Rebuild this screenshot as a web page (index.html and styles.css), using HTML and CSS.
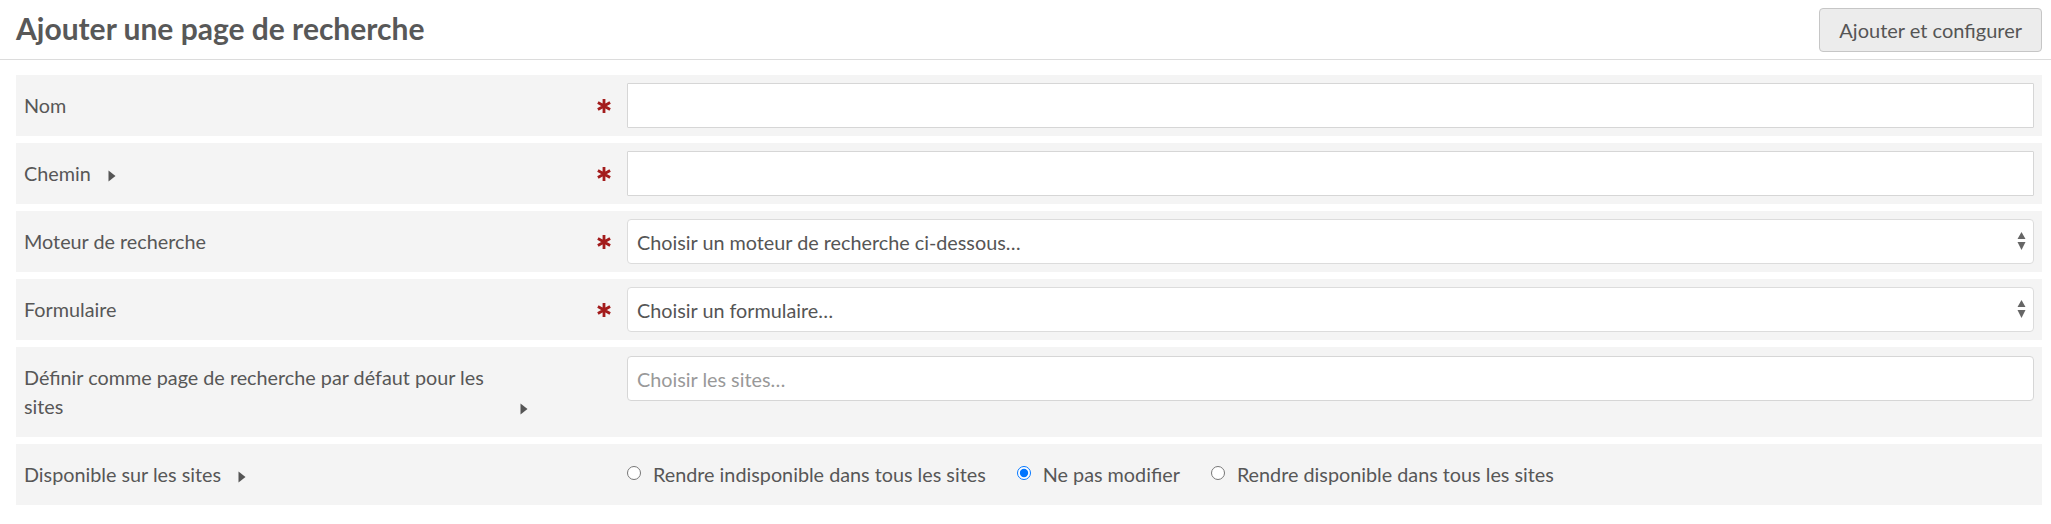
FILE: index.html
```html
<!DOCTYPE html>
<html lang="fr">
<head>
    <meta charset="UTF-8">
    <meta name="viewport" content="width=device-width, initial-scale=1.0">
    <title>Ajouter une page de recherche</title>
    <link rel="stylesheet" href="styles.css">
</head>
<body>
    <header class="page-header">
        <h1 class="page-title">Ajouter une page de recherche</h1>
        <button type="button" class="btn">Ajouter et configurer</button>
    </header>

    <form class="search-form">
        <div class="form-row">
            <label class="form-label" for="name"><span class="label-text">Nom</span></label>
            <div class="required">
                <svg class="asterisk" width="14" height="14" viewBox="0 0 14 14"><path d="M7 0V14M0.9 3.5L13.1 10.5M0.9 10.5L13.1 3.5"/></svg>
            </div>
            <div class="control"><input type="text" id="name" class="text-input"></div>
        </div>

        <div class="form-row">
            <label class="form-label" for="path">
                <span class="label-text">Chemin</span>
                <span class="caret"><svg width="8" height="12" viewBox="0 0 8 12"><path d="M0.5 0.5L7.5 6L0.5 11.5Z"/></svg></span>
            </label>
            <div class="required">
                <svg class="asterisk" width="14" height="14" viewBox="0 0 14 14"><path d="M7 0V14M0.9 3.5L13.1 10.5M0.9 10.5L13.1 3.5"/></svg>
            </div>
            <div class="control"><input type="text" id="path" class="text-input"></div>
        </div>

        <div class="form-row">
            <label class="form-label" for="engine"><span class="label-text">Moteur de recherche</span></label>
            <div class="required">
                <svg class="asterisk" width="14" height="14" viewBox="0 0 14 14"><path d="M7 0V14M0.9 3.5L13.1 10.5M0.9 10.5L13.1 3.5"/></svg>
            </div>
            <div class="control">
                <div class="select-wrap">
                    <select id="engine" class="select">
                        <option>Choisir un moteur de recherche ci-dessous…</option>
                    </select>
                    <svg class="select-arrows" width="9" height="18" viewBox="0 0 9 18"><path d="M0.5 7L4.5 0L8.5 7Z M0.5 10H8.5L4.5 18Z"/></svg>
                </div>
            </div>
        </div>

        <div class="form-row">
            <label class="form-label" for="form"><span class="label-text">Formulaire</span></label>
            <div class="required">
                <svg class="asterisk" width="14" height="14" viewBox="0 0 14 14"><path d="M7 0V14M0.9 3.5L13.1 10.5M0.9 10.5L13.1 3.5"/></svg>
            </div>
            <div class="control">
                <div class="select-wrap">
                    <select id="form" class="select">
                        <option>Choisir un formulaire…</option>
                    </select>
                    <svg class="select-arrows" width="9" height="18" viewBox="0 0 9 18"><path d="M0.5 7L4.5 0L8.5 7Z M0.5 10H8.5L4.5 18Z"/></svg>
                </div>
            </div>
        </div>

        <div class="form-row">
            <label class="form-label" for="sites">
                <span class="label-text">Définir comme page de recherche par défaut pour les sites</span>
                <span class="caret"><svg width="8" height="12" viewBox="0 0 8 12"><path d="M0.5 0.5L7.5 6L0.5 11.5Z"/></svg></span>
            </label>
            <div class="required"></div>
            <div class="control control-top"><input type="text" id="sites" class="text-input rounded" placeholder="Choisir les sites…"></div>
        </div>

        <div class="form-row">
            <label class="form-label">
                <span class="label-text">Disponible sur les sites</span>
                <span class="caret"><svg width="8" height="12" viewBox="0 0 8 12"><path d="M0.5 0.5L7.5 6L0.5 11.5Z"/></svg></span>
            </label>
            <div class="required"></div>
            <div class="control">
                <div class="radio-group">
                    <label class="radio"><input type="radio" name="available" value="off"> Rendre indisponible dans tous les sites</label>
                    <label class="radio"><input type="radio" name="available" value="keep" checked> Ne pas modifier</label>
                    <label class="radio"><input type="radio" name="available" value="on"> Rendre disponible dans tous les sites</label>
                </div>
            </div>
        </div>
    </form>
</body>
</html>
```

FILE: styles.css
```css
body {
    margin: 0;
    font-family: 'Lato', 'Open Sans', sans-serif;
    font-size: 19.8px;
    line-height: 29px;
    color: #575757;
    background-color: #fff;
}
.page-header {
    display: flex;
    justify-content: space-between;
    align-items: flex-start;
    height: 59px;
    padding: 0 9px 0 16px;
    border-bottom: 1px solid #dcdcdc;
}
.page-title {
    margin: 0;
    padding-top: 10px;
    font-size: 30px;
    font-weight: bold;
    line-height: 36px;
    color: #585858;
}
.btn {
    margin-top: 8px;
    height: 44px;
    padding: 0 19px;
    font-family: inherit;
    font-size: 20px;
    color: #555;
    background-color: #ececec;
    border: 1px solid #c6c6c6;
    border-radius: 4px;
    cursor: pointer;
}
.search-form {
    display: flex;
    flex-direction: column;
    gap: 7px;
    padding: 15px 9px 0 16px;
}
.form-row {
    display: grid;
    grid-template-columns: 520px 91px 1fr;
    background-color: #f4f4f4;
}
.form-label {
    display: flex;
    align-items: flex-end;
    padding: 16px 8px;
}
.label-text {
    flex: 0 1 auto;
}
.caret {
    flex: none;
    margin-left: 17px;
}
.caret svg {
    fill: #555;
    vertical-align: -1px;
}
.required {
    display: flex;
    justify-content: flex-end;
    align-items: center;
    padding-right: 16px;
}
.asterisk {
    stroke: #a31c1c;
    stroke-width: 2.8;
    fill: none;
}
.control {
    padding: 8px 8px 8px 0;
    align-self: center;
}
.control-top {
    align-self: start;
    padding-top: 9px;
}
.text-input, .select {
    box-sizing: border-box;
    width: 100%;
    height: 45px;
    padding: 0 9px;
    font-family: inherit;
    font-size: 19.8px;
    color: #555;
    background-color: #fff;
    border: 1px solid #d6d6d6;
    border-radius: 1px;
    outline: none;
}
.text-input.rounded {
    border-radius: 4px;
}
.text-input::placeholder {
    color: #999;
}
.select-wrap {
    position: relative;
}
.select {
    appearance: none;
    -webkit-appearance: none;
    border-radius: 4px;
    border-color: #dcdcdc;
}
.select-arrows {
    position: absolute;
    right: 8px;
    top: 13px;
    fill: #666;
    pointer-events: none;
}
.radio-group {
    display: flex;
    gap: 31px;
    padding: 8px 0;
}
.radio {
    display: flex;
    align-items: center;
    white-space: nowrap;
}
.radio input {
    width: 14px;
    height: 14px;
    margin: -4px 12px 0 0;
}
```
